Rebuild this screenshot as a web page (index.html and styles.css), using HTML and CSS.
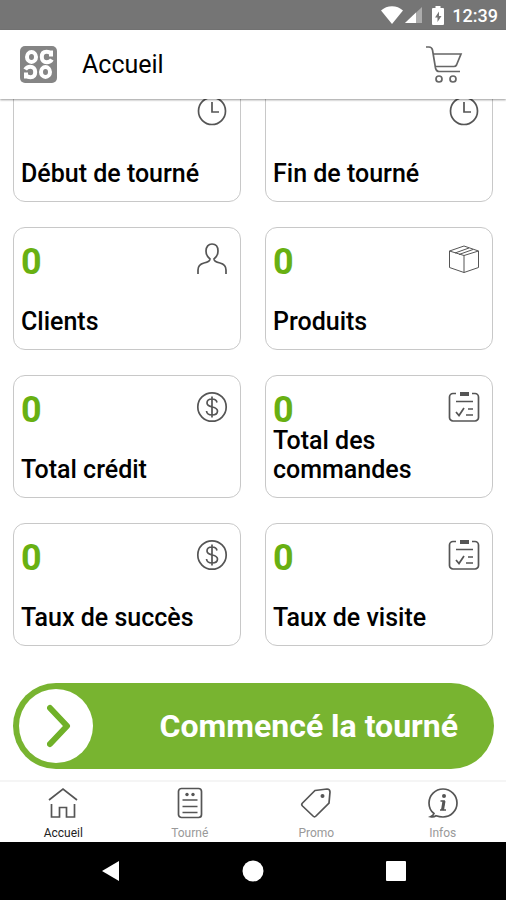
FILE: index.html
```html
<!DOCTYPE html>
<html lang="fr">
<head>
<meta charset="utf-8">
<meta name="viewport" content="width=device-width, initial-scale=1">
<title>Accueil</title>
<link rel="stylesheet" href="styles.css">
</head>
<body>
<svg class="defs" aria-hidden="true">
  <symbol id="clock" viewBox="0 0 32 32"><circle cx="16" cy="16" r="13.5"/><path d="M16 7v10h7"/></symbol>
  <symbol id="user" viewBox="0 0 32 32"><path d="M2 31v-4c0-4 2-6 6-7 4-.8 6-1.500 6-4-2.500-2-4-4.500-4-8 0-4.500 2.500-7 6-7s6 2.500 6 7c0 3.500-1.500 6-4 8 0 2.500 2 3.200 6 4 4 1 6 3 6 7v4"/></symbol>
  <symbol id="box" viewBox="0 0 32 32"><path d="M1.500 8 16 3l14.500 5v16.500L16 29.500l-14.500-5zM1.500 8 16 12.500 30.500 8M16 12.500v17M7 10l14-5M11 11.500l14-5"/></symbol>
  <symbol id="dollar" viewBox="0 0 32 32"><circle cx="16" cy="16" r="14.200"/><path d="M16 5.500v21M21 11.500c-.5-2.300-2.200-3.500-5-3.500-3 0-5 1.500-5 4 0 5.500 10.500 2.500 10.500 8 0 2.500-2.200 4-5.500 4s-5.200-1.500-5.500-4"/></symbol>
  <symbol id="list" viewBox="0 0 32 32"><path d="M8 2.500H5a3.500 3.500 0 0 0-3.500 3.500v20.500A3.500 3.500 0 0 0 5 30h22a3.500 3.500 0 0 0 3.500-3.500V6A3.500 3.500 0 0 0 27 2.500h-3"/><path class="thick" d="M12 3h9"/><path d="M8 10.500h17M8 21l3 3.500 5-7.500M20 18h5M18 24h7"/></symbol>
</svg>

<div class="status">
  <svg class="wifi" viewBox="0 0 22 18"><path d="M0 4.500C6-1.300 16-1.300 22 4.500L11 18z"/></svg>
  <svg class="signal" viewBox="0 0 17 16"><path d="M0 16 17 0v16z" opacity=".4"/><path d="M0 16 11 5.600V16z"/></svg>
  <svg class="battery" viewBox="0 0 12 19"><path d="M3.500 0h5v2H11a1 1 0 0 1 1 1v15a1 1 0 0 1-1 1H1a1 1 0 0 1-1-1V3a1 1 0 0 1 1-1h2.500zM7 5.500 3 11.500h2.500V16l4-6H7z" fill-rule="evenodd"/></svg>
  <span>12:39</span>
</div>

<header class="header">
  <svg class="logo" viewBox="0 0 37 37" aria-hidden="true">
    <rect width="37" height="37" rx="5"/>
    <g id="mark"><ellipse cx="11.500" cy="11" rx="4.500" ry="5"/><path d="M31 4.500v6M31 7.500c-1-1-2.500-1.700-4.500-1.700-3 0-4.700 2-4.700 5.200s2 5.300 5 5.300c2.200 0 4-1 5-2.800"/></g>
    <use href="#mark" transform="rotate(180 18.500 18.500)"/>
  </svg>
  <h1>Accueil</h1>
  <button class="cart" type="button" aria-label="Panier"><svg viewBox="0 0 38 40"><path d="M1 2h3c2 0 3 1 3.500 3l3 18c.5 2.500 1.500 3.500 4 3.500H35M8 9h28l-4.500 11c-.5 1-1 1.500-2.500 1.500H10"/><circle cx="14" cy="34" r="3"/><circle cx="28" cy="34" r="3"/></svg></button>
</header>

<main class="content">
  <div class="cards">
    <section class="card"><div class="top"><span class="num"></span><svg class="icon"><use href="#clock"/></svg></div><h2>Début de tourné</h2></section>
    <section class="card"><div class="top"><span class="num"></span><svg class="icon"><use href="#clock"/></svg></div><h2>Fin de tourné</h2></section>
    <section class="card"><div class="top"><span class="num">0</span><svg class="icon"><use href="#user"/></svg></div><h2>Clients</h2></section>
    <section class="card"><div class="top"><span class="num">0</span><svg class="icon thin"><use href="#box"/></svg></div><h2>Produits</h2></section>
    <section class="card"><div class="top"><span class="num">0</span><svg class="icon"><use href="#dollar"/></svg></div><h2>Total crédit</h2></section>
    <section class="card"><div class="top"><span class="num">0</span><svg class="icon"><use href="#list"/></svg></div><h2>Total des commandes</h2></section>
    <section class="card"><div class="top"><span class="num">0</span><svg class="icon"><use href="#dollar"/></svg></div><h2>Taux de succès</h2></section>
    <section class="card"><div class="top"><span class="num">0</span><svg class="icon"><use href="#list"/></svg></div><h2>Taux de visite</h2></section>
  </div>
  <button class="start" type="button">
    <span class="knob"><svg viewBox="0 0 24 44"><path d="M3 4l17 18L3 40"/></svg></span>
    <span class="label">Commencé la tourné</span>
  </button>
</main>

<nav class="tabs">
  <a class="active" href="#accueil"><svg viewBox="0 0 32 32"><path d="M2 13 16 2l14 11M4.500 17v13h8v-9.500h7V30h8V17"/></svg>Accueil</a>
  <a href="#tourne"><svg viewBox="0 0 32 32"><rect x="4.500" y="1.500" width="23" height="29" rx="3"/><circle class="dot" cx="13" cy="7.500" r="1.700"/><circle class="dot" cx="19" cy="7.500" r="1.700"/><path d="M8.500 13h15M8.500 19.500h15M8.500 25.500h15"/></svg>Tourné</a>
  <a href="#promo"><svg viewBox="0 0 32 32"><path d="M15 3.500 27 2c2 0 3 1 3 3l-1 11-13 13c-1 1-2 1-3 0L2.500 19c-1-1-1-2 0-3z"/><circle class="dot" cx="22.500" cy="9" r="2"/></svg>Promo</a>
  <a href="#infos"><svg viewBox="0 0 32 32"><path d="M7 26.500C3.500 24 2 20 2 16a14 14 0 1 1 14 14c-3 0-5-.5-7-1.200-1.500 1-3.500 1.400-5.500.9 1.500-.7 3-1.700 3.500-3.200z"/><circle class="dot" cx="17" cy="9" r="2"/><path d="M13.500 14H17l-1.500 9H19M13 23h3"/><path class="bold" d="M17 14l-1.500 9"/></svg>Infos</a>
</nav>

<div class="system">
  <button type="button" aria-label="Retour"><svg viewBox="0 0 22 22"><path d="M3 11 20 1v20z"/></svg></button>
  <button type="button" aria-label="Écran d'accueil"><svg viewBox="0 0 22 22"><circle cx="11" cy="11" r="10.500"/></svg></button>
  <button type="button" aria-label="Applications récentes"><svg viewBox="0 0 22 22"><rect x="1" y="1" width="20" height="20" rx="1"/></svg></button>
</div>
</body>
</html>
```
FILE: styles.css
```css
* { box-sizing: border-box; }

body {
  margin: 0;
  height: 100vh;
  display: flex;
  flex-direction: column;
  background: #fff;
  color: #000;
  font-family: Roboto, "Liberation Sans", sans-serif;
}

h1, h2 { margin: 0; }

button {
  border: 0;
  padding: 0;
  background: none;
  font: inherit;
  cursor: pointer;
}

svg { display: block; flex: none; }

.defs { display: none; }

.status {
  flex: none;
  height: 30px;
  padding: 0 8px;
  display: flex;
  align-items: center;
  justify-content: flex-end;
  background: #757575;
  color: #fff;
  font-size: 18px;
  font-weight: 500;
}

.status svg { fill: #fff; }
.wifi { width: 22px; height: 18px; margin-right: 2px; }
.signal { width: 17px; height: 16px; margin-right: 10px; }
.battery { width: 12px; height: 19px; margin-right: 8px; }

.header {
  flex: none;
  position: relative;
  z-index: 1;
  height: 69px;
  padding: 0 43px 0 20px;
  display: flex;
  align-items: center;
  background: #fff;
  box-shadow: 0 1px 2px rgba(0, 0, 0, .4);
}

.logo {
  width: 37px;
  height: 37px;
  fill: none;
  stroke: #fff;
  stroke-width: 4;
}

.logo rect { fill: #858585; stroke: none; }

.header h1 {
  flex: 1;
  margin-left: 25px;
  font-size: 25px;
  font-weight: 400;
  line-height: 30px;
}

.cart svg {
  width: 38px;
  height: 40px;
  fill: none;
  stroke: #666;
  stroke-width: 1.7;
}

.content {
  flex: 1;
  min-height: 0;
  overflow: hidden;
  padding: 0 12px 11px 13px;
  display: flex;
  flex-direction: column;
  justify-content: flex-end;
}

.cards {
  display: grid;
  grid-template-columns: 1fr 1fr;
  gap: 25px 24px;
  padding-right: 1px;
}

.card {
  height: 123px;
  padding: 12px 12px 13px 7px;
  display: flex;
  flex-direction: column;
  justify-content: space-between;
  border: 1px solid #c8c8c8;
  border-radius: 12px;
}

.top {
  height: 38px;
  display: flex;
  justify-content: space-between;
}

.num {
  color: #68b012;
  font-size: 36px;
  font-weight: 700;
  line-height: 44px;
}

.card h2 {
  font-size: 25px;
  font-weight: 500;
  line-height: 29px;
}

.icon {
  width: 32px;
  height: 32px;
  margin-top: 3px;
  fill: none;
  stroke: #555;
  stroke-width: 1.7;
}

.thin { stroke-width: 1; }
.thick { stroke-width: 4; }
.bold { stroke-width: 3; }
.dot { fill: #555; stroke: none; }

.start {
  flex: none;
  height: 86px;
  margin-top: 37px;
  padding: 0 36px 0 6px;
  display: flex;
  align-items: center;
  justify-content: space-between;
  border-radius: 43px;
  background: #78b430;
  color: #fff;
  font-size: 32px;
  font-weight: 700;
}

.knob {
  width: 74px;
  height: 74px;
  display: flex;
  align-items: center;
  justify-content: center;
  border-radius: 50%;
  background: #fff;
}

.knob svg {
  width: 24px;
  height: 44px;
  margin-left: 6px;
  fill: none;
  stroke: #70b128;
  stroke-width: 6;
  stroke-linecap: round;
  stroke-linejoin: round;
}

.tabs {
  flex: none;
  height: 62px;
  padding-top: 5px;
  display: flex;
  border-top: 2px solid #f5f5f5;
}

.tabs a {
  flex: 1;
  display: flex;
  flex-direction: column;
  align-items: center;
  gap: 7px;
  color: #999;
  font-size: 12px;
  line-height: 14px;
  text-decoration: none;
}

.tabs .active { color: #222; }

.tabs svg {
  width: 32px;
  height: 32px;
  fill: none;
  stroke: #555;
  stroke-width: 1.7;
}

.system {
  flex: none;
  height: 58px;
  padding: 0 39px;
  display: flex;
  align-items: center;
  background: #000;
}

.system button {
  flex: 1;
  display: flex;
  justify-content: center;
}

.system svg { width: 22px; height: 22px; fill: #fff; }
```
